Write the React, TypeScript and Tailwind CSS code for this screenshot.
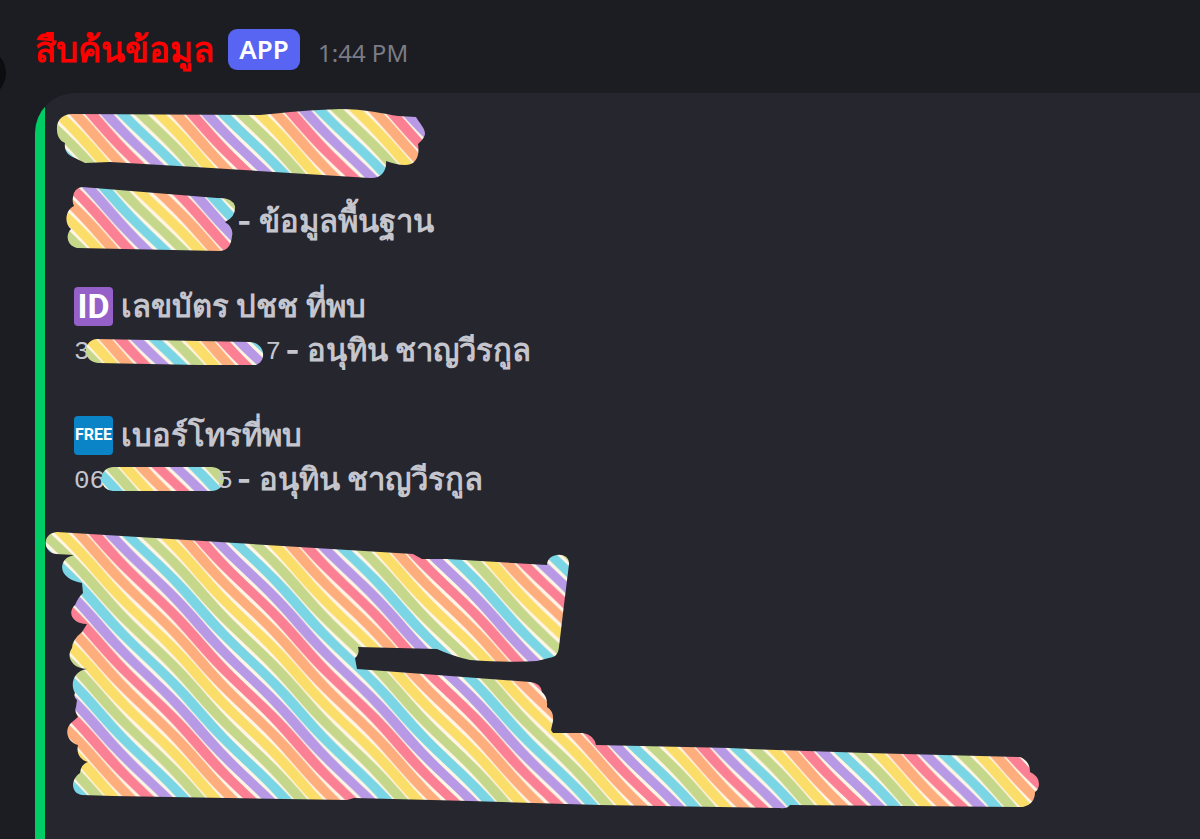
import type {ReactNode} from 'react';

// Washi tape pattern: one tile repeats every 100.5 x 104
const TILE_W = 100.5;
const TILE_H = 104;
const STRIPE = TILE_W / 6;
const COLORS = ['#fbdd6a', '#feae7d', '#fb8093', '#b799e5', '#7ad5e5', '#c5d78b'];

function stripePath(left: number, width: number) {
    const ys = Array.from({length: 27}, (_, i) => i * 4);
    const x = (y: number) =>
        left + (y * TILE_W) / TILE_H + 1.6 * Math.sin((y / TILE_H + left / TILE_W) * Math.PI * 2);
    const down = ys.map(y => `${x(y).toFixed(1)} ${y}`);
    const up = [...ys].reverse().map(y => `${(x(y) + width).toFixed(1)} ${y}`);
    return `M${down.join('L')}L${up.join('L')}Z`;
}

const stripes = Array.from({length: 14}, (_, i) => {
    const n = i - 7;
    return {d: stripePath(n * STRIPE, 13.4), color: COLORS[(n + 12) % 6]};
});

type TapeProps = {
    id: string;
    box: string;
    d: string;
    className: string;
    shift?: number;
};

function Tape({id, box, d, className, shift = 41}: TapeProps) {
    return (
        <svg viewBox={box} className={className} aria-hidden="true">
            <defs>
                <pattern
                    id={id}
                    width={TILE_W}
                    height={TILE_H}
                    patternUnits="userSpaceOnUse"
                    patternTransform={`translate(${shift} 0)`}
                >
                    <rect width={TILE_W} height={TILE_H} fill="#fff6e6"/>
                    {stripes.map(s => <path key={s.d} d={s.d} fill={s.color}/>)}
                </pattern>
            </defs>
            <path d={d} fill={`url(#${id})`}/>
        </svg>
    );
}

const TITLE_TAPE = 'M57 130C56 120 63 114 72 114L260 115C290 112 310 110 340 109C365 109 385 114 398 116L416 117C420 124 425 128 425 134C424 139 420 142 418 144C420 156 416 165 405 165C398 165 392 163 386 161C387 172 380 179 370 178L195 167L110 162L85 163C82 161 78 160 75 158C67 155 64 150 65 143C60 141 57 136 57 130Z';
const NAME_TAPE = 'M73 197Q74 188 82 187L217 198Q232 197 235 206Q236 217 225 222Q234 228 232 236Q231 250 220 251L77 248C67 246 65 235 71 229C64 224 65 210 74 206Q72 202 73 197Z';
const ID_TAPE = 'M97 339L250 342C267 343 268 366 250 366L98 363C82 362 82 340 97 339Z';
const PHONE_TAPE = 'M113 467H212C228 468 228 491 211 491H113C98 490 97 468 113 467Z';
const BODY_TAPE = 'M57 532L413 554L422 559L447 559L547 565C547 552 570 551 569 564L563 613L559 647C558 655 555 657 549 658L537 661Q510 663 470 660Q452 656 437 649L358 647Q360 654 355 658L357 669L530 682Q541 683 542 692Q548 697 547 707Q554 711 553 721L551 730L553 733L583 733Q594 735 596 745L730 748L750 749L867 753L1020 757Q1030 761 1030 772Q1039 776 1039 784Q1039 789 1035 792Q1035 804 1023 807L790 805Q787 809 780 808L600 805L470 801L354 798L347 800L113 796L82 795C72 794 69 781 80 773Q81 764 88 762C80 760 76 753 78 745C67 742 64 730 71 723L78 717Q74 711 76 707L77 700Q73 697 75 693C70 685 73 671 87 669C71 668 66 656 72 648Q72 640 82 632L87 624C72 624 67 612 75 605Q79 596 83 593L82 583C67 581 58 571 64 561Q66 557 74 555L56 554C42 552 42 533 57 532Z';

function Badge({label, className}: { label: string; className: string }) {
    return (
        <span
            className={`flex size-[39px] shrink-0 items-center justify-center rounded-[4px] font-[family-name:Roboto] text-white ${className}`}>
            {label}
        </span>
    );
}

function Digits({children}: { children: ReactNode }) {
    return (
        <span className="pt-1 font-['Liberation_Mono',monospace] text-[26px] leading-[36px] font-normal">
            {children}
        </span>
    );
}

export default function App() {
    return (
        <main
            className="flex min-h-screen flex-col overflow-hidden bg-[#1c1d22] pl-[35px] font-['Noto_Sans',sans-serif] text-[#c5c5ce]">
            <header className="relative flex h-[93px] items-center pt-[6px]">
                {/* Avatar, mostly off the left edge */}
                <span className="absolute top-[48px] -left-[79px] size-[50px] rounded-full bg-[#0c0d10]"/>
                <h1 className="text-[35px] font-bold text-[#fe0000]">สืบค้นข้อมูล</h1>
                <span
                    className="ml-[14px] flex h-[41px] w-[72px] items-center justify-center rounded-[9px] bg-[#5865f2] text-[26px] font-semibold text-white">
                    APP
                </span>
                <time className="ml-[18px] pt-[6px] text-[24px] text-[#7b7c86]">1:44 PM</time>
            </header>

            <article className="flex flex-1 overflow-hidden rounded-tl-[40px] bg-[#25262e]">
                <div className="w-[10px] shrink-0 bg-[#00cc66]"/>
                <div
                    className="min-w-0 flex-1 pt-3 pl-[29px] font-['Inter','Noto_Sans',sans-serif] text-[31px] leading-[44px] font-bold whitespace-nowrap">
                    <Tape id="tape-title" box="45 105 400 78" d={TITLE_TAPE}
                          className="-ml-[29px] h-[78px] w-[400px]"/>

                    <p className="mt-[3px] flex h-[66px] items-center">
                        <Tape
                            id="tape-name"
                            box="65 186 172 66"
                            d={NAME_TAPE}
                            shift={50}
                            className="-ml-[9px] h-[66px] w-[172px] shrink-0"
                        />
                        <span className="pt-1">- ข้อมูลพื้นฐาน</span>
                    </p>

                    <section className="mt-8">
                        <h2 className="flex items-center gap-2">
                            <Badge label="ID" className="bg-[#9560c8] text-[34px]"/>
                            เลขบัตร ปชช ที่พบ
                        </h2>
                        <p className="flex items-center">
                            <Digits>3</Digits>
                            <Tape
                                id="tape-id"
                                box="86 336 180 29"
                                d={ID_TAPE}
                                shift={55}
                                className="-ml-1 h-[29px] w-[180px] shrink-0"
                            />
                            <Digits>7</Digits>
                            <span className="pl-1">- อนุทิน ชาญวีรกูล</span>
                        </p>
                    </section>

                    <section className="mt-[41px]">
                        <h2 className="flex items-center gap-2">
                            <Badge label="FREE" className="bg-[#0a84c6] text-[16px]"/>
                            เบอร์โทรที่พบ
                        </h2>
                        <p className="flex items-center">
                            <Digits>06</Digits>
                            <Tape
                                id="tape-phone"
                                box="100 465 126 28"
                                d={PHONE_TAPE}
                                shift={70}
                                className="-mr-[9px] -ml-[5px] h-[28px] w-[126px] shrink-0"
                            />
                            <Digits>5</Digits>
                            <span className="pl-1">- อนุทิน ชาญวีรกูล</span>
                        </p>
                    </section>

                    <Tape
                        id="tape-body"
                        box="45 526 1000 288"
                        d={BODY_TAPE}
                        className="mt-[25px] -ml-[29px] h-[288px] w-[1000px]"
                    />
                </div>
            </article>
        </main>
    );
}
